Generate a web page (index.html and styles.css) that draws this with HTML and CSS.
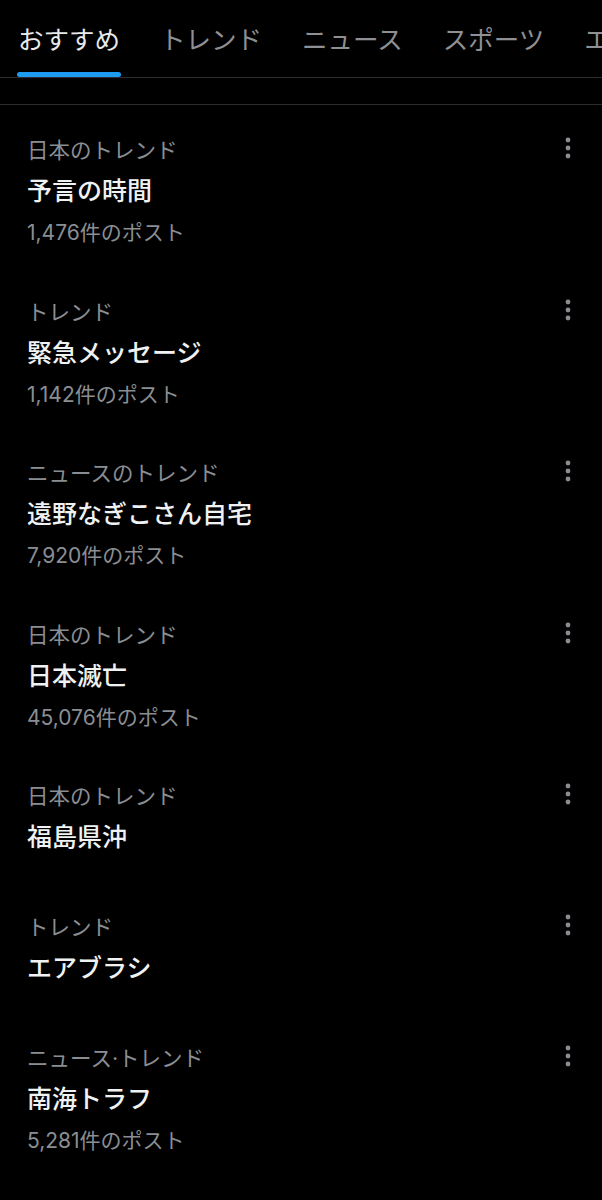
FILE: index.html
```html
<!DOCTYPE html>
<html lang="ja">
<head>
<meta charset="utf-8">
<link rel="stylesheet" href="styles.css">
</head>
<body>
<div class="page">
  <nav class="tabs">
    <div class="tab active"><span class="tab-label">おすすめ</span><span class="indicator"></span></div>
    <div class="tab"><span class="tab-label">トレンド</span></div>
    <div class="tab"><span class="tab-label">ニュース</span></div>
    <div class="tab"><span class="tab-label">スポーツ</span></div>
    <div class="tab"><span class="tab-label">エンタメ</span></div>
  </nav>
  <div class="spacer"></div>
  <ul class="trends">
    <li class="trend">
      <div class="body">
        <div class="cat">日本のトレンド</div>
        <div class="title">予言の時間</div>
        <div class="count">1,476件のポスト</div>
      </div>
      <svg class="more" width="10" height="30" viewBox="0 0 10 30"><circle cx="5" cy="7" r="2.4"/><circle cx="5" cy="15" r="2.4"/><circle cx="5" cy="23" r="2.4"/></svg>
    </li>
    <li class="trend">
      <div class="body">
        <div class="cat">トレンド</div>
        <div class="title">緊急メッセージ</div>
        <div class="count">1,142件のポスト</div>
      </div>
      <svg class="more" width="10" height="30" viewBox="0 0 10 30"><circle cx="5" cy="7" r="2.4"/><circle cx="5" cy="15" r="2.4"/><circle cx="5" cy="23" r="2.4"/></svg>
    </li>
    <li class="trend">
      <div class="body">
        <div class="cat">ニュースのトレンド</div>
        <div class="title">遠野なぎこさん自宅</div>
        <div class="count">7,920件のポスト</div>
      </div>
      <svg class="more" width="10" height="30" viewBox="0 0 10 30"><circle cx="5" cy="7" r="2.4"/><circle cx="5" cy="15" r="2.4"/><circle cx="5" cy="23" r="2.4"/></svg>
    </li>
    <li class="trend">
      <div class="body">
        <div class="cat">日本のトレンド</div>
        <div class="title">日本滅亡</div>
        <div class="count">45,076件のポスト</div>
      </div>
      <svg class="more" width="10" height="30" viewBox="0 0 10 30"><circle cx="5" cy="7" r="2.4"/><circle cx="5" cy="15" r="2.4"/><circle cx="5" cy="23" r="2.4"/></svg>
    </li>
    <li class="trend">
      <div class="body">
        <div class="cat">日本のトレンド</div>
        <div class="title">福島県沖</div>
      </div>
      <svg class="more" width="10" height="30" viewBox="0 0 10 30"><circle cx="5" cy="7" r="2.4"/><circle cx="5" cy="15" r="2.4"/><circle cx="5" cy="23" r="2.4"/></svg>
    </li>
    <li class="trend">
      <div class="body">
        <div class="cat">トレンド</div>
        <div class="title">エアブラシ</div>
      </div>
      <svg class="more" width="10" height="30" viewBox="0 0 10 30"><circle cx="5" cy="7" r="2.4"/><circle cx="5" cy="15" r="2.4"/><circle cx="5" cy="23" r="2.4"/></svg>
    </li>
    <li class="trend">
      <div class="body">
        <div class="cat">ニュース·トレンド</div>
        <div class="title">南海トラフ</div>
        <div class="count">5,281件のポスト</div>
      </div>
      <svg class="more" width="10" height="30" viewBox="0 0 10 30"><circle cx="5" cy="7" r="2.4"/><circle cx="5" cy="15" r="2.4"/><circle cx="5" cy="23" r="2.4"/></svg>
    </li>
  </ul>
</div>
</body>
</html>
```
FILE: styles.css
```css
* { box-sizing: border-box; }
html, body {
  margin: 0;
  padding: 0;
  background: #000;
}
body {
  font-family: "Inter", "Noto Sans CJK JP", sans-serif;
  color: #e7e9ea;
  width: 602px;
  height: 1200px;
  overflow: hidden;
}
.page {
  width: 602px;
}
.tabs {
  display: flex;
  flex-wrap: nowrap;
  gap: 40px;
  padding-left: 18px;
  height: 78px;
  border-bottom: 1px solid #2a2d30;
  overflow: hidden;
}
.tab {
  position: relative;
  flex: none;
  display: flex;
  flex-direction: column;
  align-items: stretch;
  padding-top: 22px;
}
.tab-label {
  font-size: 25.5px;
  line-height: 36px;
  color: #8e9093;
  white-space: nowrap;
}
.tab.active .tab-label {
  color: #e7e9ea;
}
.indicator {
  position: absolute;
  left: -1px;
  right: -1px;
  bottom: 0;
  height: 5px;
  border-radius: 3px;
  background: #1d9bf0;
}
.spacer {
  height: 27px;
  border-bottom: 1px solid #2a2d30;
}
.trends {
  list-style: none;
  margin: 0;
  padding: 0;
}
.trend {
  display: flex;
  justify-content: space-between;
  align-items: flex-start;
  padding: 30px 29px 17.5px 27px;
}
.body {
  display: flex;
  flex-direction: column;
}
.cat {
  font-size: 21.5px;
  line-height: 30px;
  color: #8a8e93;
  white-space: nowrap;
}
.title {
  font-size: 25px;
  line-height: 32px;
  padding: 10px 0;
  font-weight: 500;
  color: #eff1f2;
  white-space: nowrap;
}
.title:last-child {
  padding-bottom: 11.5px;
}
.count {
  font-size: 21px;
  line-height: 32px;
  color: #8a8e93;
  white-space: nowrap;
}
.more {
  fill: #8a8e93;
  margin-top: -2px;
}
```
